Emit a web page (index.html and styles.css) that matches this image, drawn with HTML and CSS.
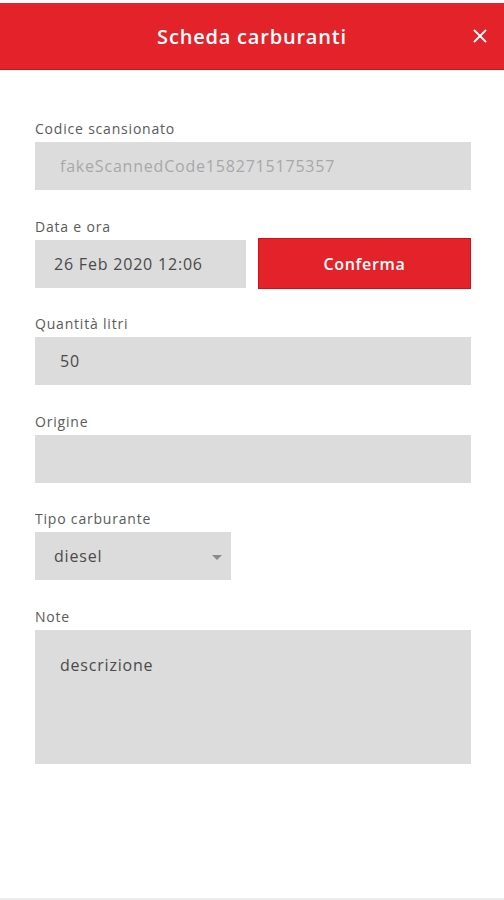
FILE: index.html
```html
<!DOCTYPE html>
<html lang="it">
<head>
  <meta charset="UTF-8" />
  <meta name="viewport" content="width=device-width, initial-scale=1.0" />
  <title>Scheda carburanti</title>
  <link rel="stylesheet" href="styles.css">
</head>
<body>
  <header>
    <h1>Scheda carburanti</h1>
    <button class="close-btn" aria-label="Chiudi">
      <svg width="14" height="14" viewBox="0 0 14 14">
        <path d="M1.5 1.5 L12.5 12.5 M12.5 1.5 L1.5 12.5" stroke="#fff" stroke-width="1.8" stroke-linecap="round" fill="none" />
      </svg>
    </button>
  </header>

  <main class="form">
    <div class="field">
      <label>Codice scansionato</label>
      <div class="input input-disabled">fakeScannedCode1582715175357</div>
    </div>

    <div class="field">
      <label>Data e ora</label>
      <div class="date-row">
        <div class="input input-date">26 Feb 2020 12:06</div>
        <button class="btn-confirm">Conferma</button>
      </div>
    </div>

    <div class="field">
      <label>Quantità litri</label>
      <div class="input">50</div>
    </div>

    <div class="field">
      <label>Origine</label>
      <div class="input"></div>
    </div>

    <div class="field">
      <label>Tipo carburante</label>
      <div class="input select">
        <span>diesel</span>
        <span class="caret"></span>
      </div>
    </div>

    <div class="field">
      <label>Note</label>
      <div class="input textarea">descrizione</div>
    </div>
  </main>

  <footer></footer>
</body>
</html>
```

FILE: styles.css
```css
html, body {
  height: 100%;
}

body {
  margin: 0;
  padding-top: 3px;
  box-sizing: border-box;
  font-family: "Open Sans", "Noto Sans", sans-serif;
  background-color: #fff;
  color: #555;
  display: flex;
  flex-direction: column;
}

header {
  background-color: #e3222a;
  height: 67px;
  border-bottom: 1px solid #c8151c;
  box-sizing: border-box;
  display: flex;
  align-items: center;
  justify-content: center;
  position: relative;
}

header h1 {
  margin: 0;
  color: #fff;
  font-size: 20px;
  font-weight: 600;
  letter-spacing: 0.8px;
}

.close-btn {
  position: absolute;
  right: 17px;
  top: 26px;
  background: none;
  border: none;
  padding: 0;
  cursor: pointer;
}

.form {
  flex: 1;
  padding: 52px 33px 0 35px;
}

.field {
  margin-bottom: 29.5px;
}

.field label {
  display: block;
  font-size: 14px;
  line-height: 17px;
  margin-bottom: 5px;
  margin-top: -2px;
  letter-spacing: 0.8px;
  color: #5a5a5a;
}

.input {
  background-color: #dcdcdc;
  height: 48px;
  box-sizing: border-box;
  padding: 0 25px;
  display: flex;
  align-items: center;
  font-size: 16px;
  letter-spacing: 0.8px;
  color: #4a4a4a;
}

.input-disabled {
  color: #a8a8a8;
}

.date-row {
  display: grid;
  grid-template-columns: 211px 1fr;
  column-gap: 12px;
  align-items: center;
}

.input-date {
  padding-left: 19px;
}

.btn-confirm {
  height: 51px;
  margin: -1.5px 0;
  background-color: #e3222a;
  border: 1px solid #c8151c;
  color: #fff;
  font-family: inherit;
  font-size: 16px;
  font-weight: 600;
  letter-spacing: 0.7px;
  cursor: pointer;
}

.select {
  width: 196px;
  padding: 0 9px 0 19px;
  justify-content: space-between;
}

.caret {
  width: 0;
  height: 0;
  border-left: 5px solid transparent;
  border-right: 5px solid transparent;
  border-top: 5px solid #8a8a8a;
  margin-top: 2px;
}

.textarea {
  height: 134px;
  align-items: flex-start;
  padding-top: 24px;
}

footer {
  height: 2px;
  background-color: #ececec;
}
```
